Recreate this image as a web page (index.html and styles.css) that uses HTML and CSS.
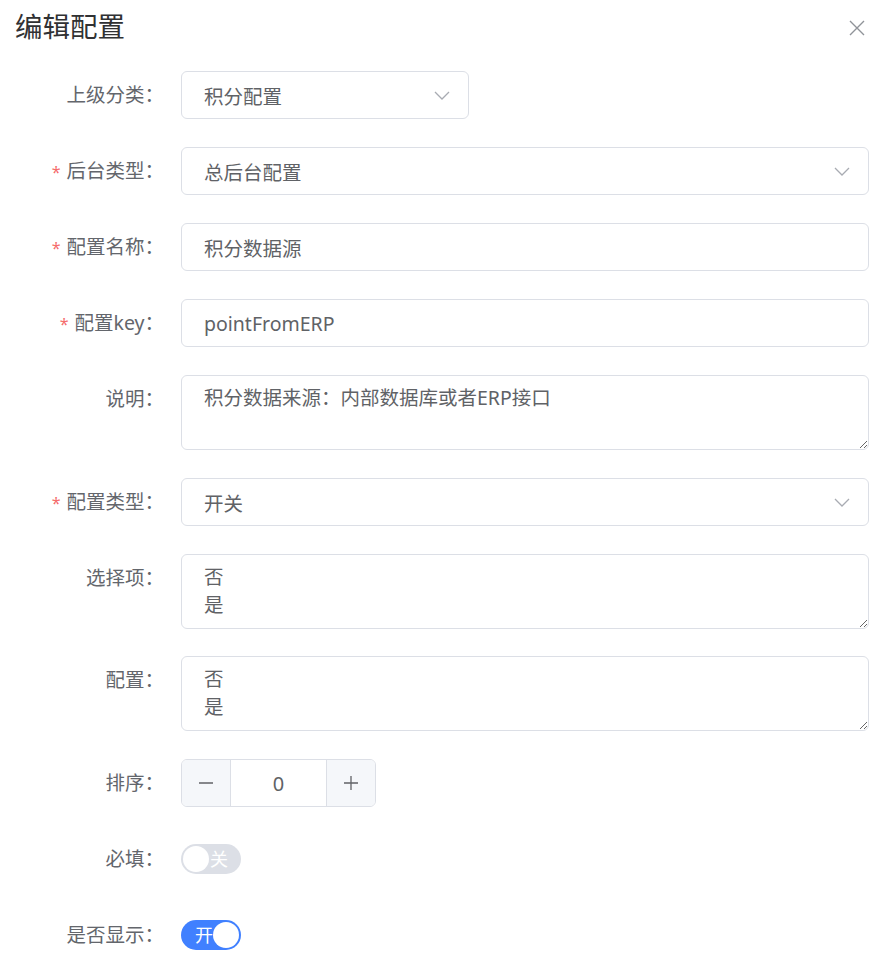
FILE: index.html
```html
<!DOCTYPE html>
<html lang="zh-CN">
<head>
<meta charset="utf-8">
<title>编辑配置</title>
<link rel="stylesheet" href="styles.css">
</head>
<body>
<div class="dialog">
  <div class="dialog-header">
    <span class="dialog-title">编辑配置</span>
    <svg class="close" width="16" height="16" viewBox="0 0 16 16"><path d="M1 1 L15 15 M15 1 L1 15" stroke="#909399" stroke-width="1.4" fill="none"/></svg>
  </div>
  <form class="form">
    <div class="item">
      <label class="label">上级分类：</label>
      <div class="control">
        <div class="input select short"><span class="value">积分配置</span><svg class="caret" width="16" height="9" viewBox="0 0 16 9"><path d="M1 1 L8 8 L15 1" stroke="#a8abb2" stroke-width="1.3" fill="none"/></svg></div>
      </div>
    </div>
    <div class="item">
      <label class="label"><span class="req">*</span>后台类型：</label>
      <div class="control">
        <div class="input select"><span class="value">总后台配置</span><svg class="caret" width="16" height="9" viewBox="0 0 16 9"><path d="M1 1 L8 8 L15 1" stroke="#a8abb2" stroke-width="1.3" fill="none"/></svg></div>
      </div>
    </div>
    <div class="item">
      <label class="label"><span class="req">*</span>配置名称：</label>
      <div class="control">
        <div class="input"><span class="value">积分数据源</span></div>
      </div>
    </div>
    <div class="item">
      <label class="label"><span class="req">*</span>配置key：</label>
      <div class="control">
        <div class="input"><span class="value">pointFromERP</span></div>
      </div>
    </div>
    <div class="item">
      <label class="label">说明：</label>
      <div class="control">
        <textarea class="textarea" readonly>积分数据来源：内部数据库或者ERP接口</textarea>
      </div>
    </div>
    <div class="item">
      <label class="label"><span class="req">*</span>配置类型：</label>
      <div class="control">
        <div class="input select"><span class="value">开关</span><svg class="caret" width="16" height="9" viewBox="0 0 16 9"><path d="M1 1 L8 8 L15 1" stroke="#a8abb2" stroke-width="1.3" fill="none"/></svg></div>
      </div>
    </div>
    <div class="item">
      <label class="label">选择项：</label>
      <div class="control">
        <textarea class="textarea" readonly>否
是</textarea>
      </div>
    </div>
    <div class="item">
      <label class="label">配置：</label>
      <div class="control">
        <textarea class="textarea" readonly>否
是</textarea>
      </div>
    </div>
    <div class="item">
      <label class="label">排序：</label>
      <div class="control">
        <div class="number">
          <span class="num-btn minus"><svg width="16" height="16" viewBox="0 0 16 16"><path d="M1 8 H15" stroke="#606266" stroke-width="1.3"/></svg></span>
          <span class="num-value">0</span>
          <span class="num-btn plus"><svg width="16" height="16" viewBox="0 0 16 16"><path d="M1 8 H15 M8 1 V15" stroke="#606266" stroke-width="1.3"/></svg></span>
        </div>
      </div>
    </div>
    <div class="item">
      <label class="label">必填：</label>
      <div class="control center">
        <span class="switch off"><span class="knob"></span><span class="switch-text">关</span></span>
      </div>
    </div>
    <div class="item">
      <label class="label">是否显示：</label>
      <div class="control center">
        <span class="switch on"><span class="switch-text">开</span><span class="knob"></span></span>
      </div>
    </div>
  </form>
</div>
</body>
</html>
```
FILE: styles.css
```css
* { box-sizing: border-box; }
html, body { margin: 0; padding: 0; background: #fff; }
body {
  font-family: "Noto Sans", "Noto Sans CJK SC", sans-serif;
  color: #606266;
}
.dialog { width: 890px; }
.dialog-header {
  display: flex;
  justify-content: space-between;
  align-items: center;
  padding: 8px 25px 0 15px;
  height: 46px;
}
.dialog-title {
  font-size: 27.5px;
  line-height: 38px;
  color: #303133;
}
.close { display: block; margin-top: 2px; }
.form {
  margin: 25px 0 0 0;
  padding: 0 21px 0 20px;
}
.item {
  display: flex;
  align-items: flex-start;
  margin-bottom: 28px;
}
.item:nth-child(8) { margin-top: -1px; }
.label {
  width: 161px;
  height: 48px;
  flex: none;
  text-align: right;
  padding-right: 17px;
  font-size: 19.5px;
  line-height: 48px;
  color: #63666c;
  white-space: nowrap;
  overflow: visible;
}
.req {
  color: #f56c6c;
  margin-right: 6px;
  font-size: 16px;
  line-height: 1;
}
.control { flex: 1; min-width: 0; }
.control.center {
  height: 48px;
  display: flex;
  align-items: center;
}
.input {
  height: 48px;
  border: 1px solid #dcdfe6;
  border-radius: 6px;
  padding: 0 22px;
  display: flex;
  align-items: center;
  font-size: 19.5px;
  color: #606266;
  background: #fff;
}
.input.short { width: 288px; }
.select { justify-content: space-between; padding-right: 18px; }
.caret { display: block; }
.textarea {
  display: block;
  width: 100%;
  height: 75px;
  border: 1px solid #dcdfe6;
  border-radius: 6px;
  padding: 8px 22px;
  font-family: "Noto Sans", "Noto Sans CJK SC", sans-serif;
  font-size: 19.5px;
  line-height: 28px;
  color: #606266;
  resize: vertical;
  outline: none;
  overflow: hidden;
  background: #fff;
}
.number {
  width: 195px;
  height: 48px;
  border: 1px solid #dcdfe6;
  border-radius: 6px;
  display: flex;
  overflow: hidden;
}
.num-btn {
  width: 49px;
  flex: none;
  background: #f5f7fa;
  display: flex;
  align-items: center;
  justify-content: center;
}
.num-btn.minus { border-right: 1px solid #dcdfe6; }
.num-btn.plus { border-left: 1px solid #dcdfe6; }
.num-btn svg { display: block; }
.num-value {
  flex: 1;
  display: flex;
  align-items: center;
  justify-content: center;
  font-size: 20px;
  color: #606266;
}
.switch {
  width: 60px;
  height: 30px;
  border-radius: 15px;
  display: flex;
  align-items: center;
  padding: 0 2px;
}
.switch.off { background: #dcdfe6; justify-content: flex-start; }
.switch.on { background: #4080ff; justify-content: flex-end; }
.knob {
  width: 26px;
  height: 26px;
  border-radius: 50%;
  background: #fff;
  flex: none;
}
.switch-text {
  flex: none;
  color: #fff;
  font-size: 18px;
  line-height: 30px;
}
.switch.off .switch-text { margin-left: 1px; }
.switch.on .switch-text { margin-right: 0; }
```
